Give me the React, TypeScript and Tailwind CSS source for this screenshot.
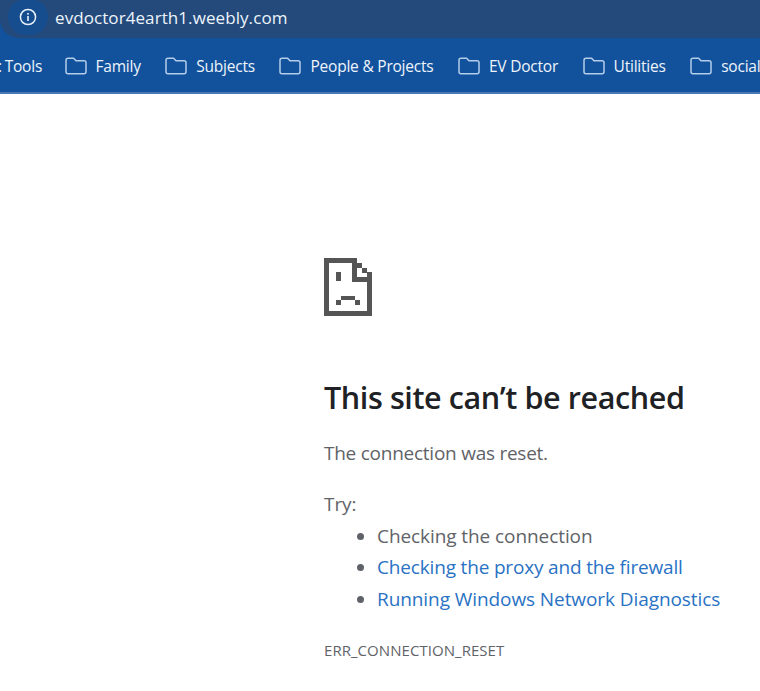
import React from "react";

const FONT = "font-['Open_Sans','Noto_Sans',sans-serif]";

const FolderIcon = () => (
  <svg width="22" height="18" viewBox="0 0 22 18" fill="none" className="shrink-0">
    <path
      d="M1 3.2C1 2 1.8 1.2 3 1.2h5.6l2.4 2.6h8c1.2 0 2 .8 2 2v9c0 1.2-.8 2-2 2H3c-1.2 0-2-.8-2-2z"
      stroke="#b4cdea"
      strokeWidth="1.5"
      strokeLinejoin="round"
    />
  </svg>
);

const Bookmark = ({ name }: { name: string }) => (
  <div className="flex items-center shrink-0 gap-[9px]">
    <FolderIcon />
    <span className="text-[15.5px] leading-5 text-[#eef4fb] tracking-[-0.22px] whitespace-nowrap">{name}</span>
  </div>
);

// sad page, drawn on the same blocky grid as the browser's icon
const SadPage = () => (
  <svg width="48" height="58" viewBox="0 0 48 58" fill="#555555" className="block">
    <path d="M0 0h33v19h15v39H0zM5 5v48h38V24H28V5z" fillRule="evenodd" />
    <rect x="33" y="5" width="5" height="5" />
    <rect x="38" y="10" width="5" height="5" />
    <rect x="43" y="14" width="5" height="5" />
    <rect x="12" y="14" width="5" height="9" />
    <rect x="17" y="38" width="14" height="4" />
    <rect x="12" y="42" width="5" height="5" />
    <rect x="31" y="42" width="5" height="5" />
  </svg>
);

export default function App() {
  return (
    <div className={`w-[760px] h-[691px] bg-white overflow-hidden ${FONT}`}>
      {/* ADDRESS BAR */}
      <div className="h-[39px] bg-[#12529c]">
        <div className="h-[38px] bg-[#234a7b] rounded-bl-[19px] flex items-center pl-2">
          <div className="w-10 h-9 -mt-1 rounded-full bg-[#154d8f] flex items-center justify-center">
            <svg width="18" height="18" viewBox="0 0 18 18" fill="none">
              <circle cx="9" cy="9" r="7.6" stroke="#e8f0fa" strokeWidth="1.5" />
              <rect x="8.2" y="8" width="1.6" height="5" fill="#e8f0fa" />
              <rect x="8.2" y="5" width="1.6" height="1.7" fill="#e8f0fa" />
            </svg>
          </div>
          <span className="ml-[7px] -mt-[2px] text-[17px] leading-6 text-[#eef4fb] tracking-[0.08px]">
            evdoctor4earth1.weebly.com
          </span>
        </div>
      </div>

      {/* BOOKMARKS */}
      <div className="h-[52px] bg-[#12529c] border-b-2 border-[#4679b5] flex items-center overflow-hidden pt-[2px] box-content -mt-px">
        <div className="flex items-center gap-[24.5px] -ml-[2px]">
          <span className="-mr-[2px] text-[15.5px] leading-5 text-[#eef4fb] tracking-[-0.22px] [word-spacing:-1px] whitespace-nowrap">
            : Tools
          </span>
          <Bookmark name="Family" />
          <Bookmark name="Subjects" />
          <Bookmark name="People & Projects" />
          <Bookmark name="EV Doctor" />
          <Bookmark name="Utilities" />
          <Bookmark name="social" />
        </div>
      </div>

      {/* ERROR PAGE */}
      <div className="pl-[324px] pt-[164px]">
        <SadPage />
        <h1 className="mt-[61px] text-[30.5px] leading-10 font-semibold text-[#202124] tracking-[-0.4px] whitespace-nowrap">
          This site can’t be reached
        </h1>
        <p className="mt-[23px] text-[19px] leading-[26px] text-[#5f6368] tracking-[-0.25px]">The connection was reset.</p>
        <p className="mt-[25px] text-[19px] leading-[26px] text-[#5f6368] tracking-[-0.08px]">Try:</p>
        <ul className="mt-[3.5px] ml-[53px] list-disc text-[19px] leading-[31.5px] text-[#5f6368] tracking-[-0.08px] whitespace-nowrap">
          <li>Checking the connection</li>
          <li>
            <span className="text-[#2a72c4] tracking-[-0.17px]">Checking the proxy and the firewall</span>
          </li>
          <li>
            <span className="text-[#2a72c4]">Running Windows Network Diagnostics</span>
          </li>
        </ul>
        <p className="mt-[24.5px] text-[15px] leading-5 text-[#5f6368] tracking-[0.05px]">ERR_CONNECTION_RESET</p>
      </div>
    </div>
  );
}
